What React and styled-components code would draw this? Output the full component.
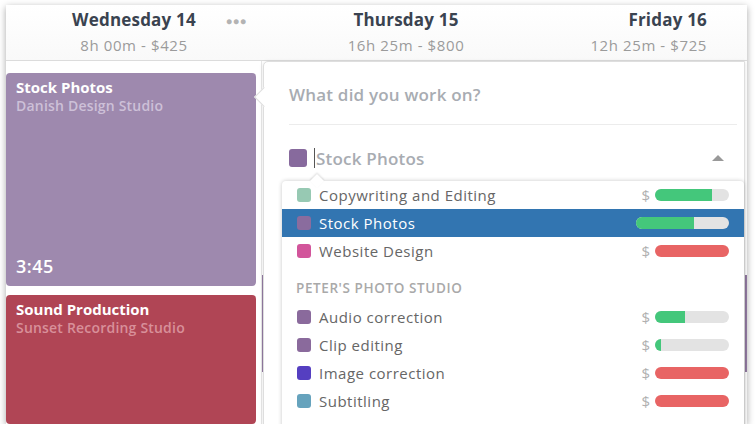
import React from 'react'
import styled, { createGlobalStyle } from 'styled-components'

const GlobalStyle = createGlobalStyle`
  html, body {
    margin: 0;
    padding: 0;
    background: #ffffff;
  }
  body {
    font-family: "Open Sans", Lato, "Liberation Sans", sans-serif;
    -webkit-font-smoothing: antialiased;
  }
`

const Page = styled.div`
  padding: 5px 0 0 6px;
`

const Window = styled.div`
  position: relative;
  width: 741px;
  height: 419px;
  overflow: hidden;
  background: #fff;
  box-shadow: 0 2px 7px rgba(0, 0, 0, 0.35);
`

const Header = styled.div`
  display: grid;
  grid-template-columns: 256px 288px 1fr;
  height: 55px;
  border-bottom: 1px solid #dcdcdc;
  background: linear-gradient(#ffffff, #f9f9f9);
`

const DayCell = styled.div`
  display: grid;
  grid-template-columns: 1fr auto 1fr;
  align-items: start;
  padding-top: 4px;
`

const Day = styled.div`
  grid-column: 2;
  display: flex;
  flex-direction: column;
  align-items: ${p => (p.$right ? 'flex-end' : 'center')};
`

const RightCell = styled.div`
  display: flex;
  justify-content: flex-end;
  padding: 4px 40px 0 0;
`

const DayTitle = styled.div`
  font-size: 17px;
  line-height: 22px;
  font-weight: 700;
  letter-spacing: 0.2px;
  color: #3a4350;
`

const DaySub = styled.div`
  font-size: 15px;
  line-height: 20px;
  margin-top: 4px;
  letter-spacing: 0.6px;
  color: #9b9b9b;
`

const Dots = styled.div`
  grid-column: 3;
  justify-self: end;
  margin: 2px 15px 0 0;
  font-size: 10px;
  line-height: 20px;
  letter-spacing: 1px;
  color: #b3b3b3;
`

const Body = styled.div`
  display: grid;
  grid-template-columns: 250px 1fr;
  column-gap: 5px;
  height: 363px;
`

const Column = styled.div`
  display: flex;
  flex-direction: column;
  gap: 9px;
  padding-top: 12px;
`

const WideColumn = styled.div`
  border-left: 1px solid #e8e8e8;
  padding-top: 214px;
`

const Event = styled.div`
  flex: ${p => p.$grow || 'none'};
  height: ${p => (p.$height ? `${p.$height}px` : 'auto')};
  background: ${p => p.$color};
  border-radius: 4px;
  padding: 5px 10px 10px 10px;
  box-sizing: border-box;
  display: flex;
  flex-direction: column;
`

const EventTitle = styled.div`
  font-size: 15px;
  line-height: 19px;
  font-weight: 700;
  color: #fff;
`

const EventClient = styled.div`
  font-size: 14px;
  line-height: 18px;
  font-weight: 600;
  letter-spacing: 0.2px;
  color: ${p => p.$color};
`

const EventTime = styled.div`
  margin-top: auto;
  font-size: 18px;
  line-height: 20px;
  font-weight: 600;
  letter-spacing: 0.5px;
  color: #fff;
`

const Block = styled.div`
  height: 97px;
  background: #937ba3;
`

const Popover = styled.div`
  position: absolute;
  left: 257px;
  top: 56px;
  width: 482px;
  bottom: -10px;
  background: #fff;
  border: 1px solid #dedede;
  border-radius: 5px 0 0 0;
  box-shadow: 0 1px 4px rgba(0, 0, 0, 0.12);
  padding: 22px 7px 0 25px;
  box-sizing: border-box;

  &::before {
    content: '';
    position: absolute;
    left: -7px;
    top: 28px;
    width: 13px;
    height: 13px;
    background: #fff;
    border-left: 1px solid #dedede;
    border-bottom: 1px solid #dedede;
    transform: rotate(45deg);
  }
`

const Question = styled.div`
  font-size: 17px;
  line-height: 22px;
  font-weight: 600;
  letter-spacing: 0.2px;
  color: #a8acb2;
  padding-bottom: 18px;
  border-bottom: 1px solid #ececec;
`

const InputRow = styled.div`
  display: flex;
  align-items: center;
  height: 24px;
  margin-top: 21px;
  padding-right: 13px;
`

const Swatch = styled.span`
  flex: none;
  width: ${p => p.$size}px;
  height: ${p => p.$size}px;
  border-radius: 3px;
  background: ${p => p.$color};
`

const Cursor = styled.span`
  width: 1px;
  height: 20px;
  margin-left: 7px;
  background: #555;
`

const InputText = styled.span`
  flex: 1;
  margin-left: 1px;
  font-size: 17px;
  font-weight: 600;
  letter-spacing: 0.2px;
  color: #a8acb2;
`

const Caret = styled.span`
  width: 0;
  height: 0;
  border-left: 6px solid transparent;
  border-right: 6px solid transparent;
  border-bottom: 6px solid #999;
`

const Dropdown = styled.div`
  position: absolute;
  left: 18px;
  right: 0;
  top: 119px;
  bottom: 0;
  background: #fff;
  border-radius: 4px 4px 0 0;
  box-shadow: 0 0 4px rgba(0, 0, 0, 0.22);

  &::before {
    content: '';
    position: absolute;
    left: 30px;
    top: -5px;
    width: 10px;
    height: 10px;
    background: #fff;
    transform: rotate(45deg);
    box-shadow: -1px -1px 2px rgba(0, 0, 0, 0.12);
  }
`

const List = styled.div`
  position: relative;
  display: flex;
  flex-direction: column;
`

const Item = styled.div`
  display: flex;
  align-items: center;
  height: 28px;
  padding: 0 15px;
  background: ${p => (p.$active ? '#3275b1' : 'transparent')};
`

const ItemName = styled.span`
  flex: 1;
  margin-left: 8px;
  font-size: 15px;
  letter-spacing: 0.5px;
  color: ${p => (p.$active ? '#ffffff' : '#666666')};
`

const Dollar = styled.span`
  font-size: 15px;
  color: #b0b0b0;
  margin-right: 5px;
`

const Bar = styled.div`
  width: ${p => p.$width}px;
  height: 12px;
  border-radius: 6px;
  background: #e3e3e3;
  overflow: hidden;
`

const Fill = styled.div`
  height: 100%;
  background: ${p => p.$color};
`

const Group = styled.div`
  padding: 15px 14px 7px;
  font-size: 13.5px;
  line-height: 16px;
  font-weight: 600;
  letter-spacing: 0.6px;
  color: #a9a9a9;
  text-transform: uppercase;
`

const projects = [
  { name: 'Copywriting and Editing', color: '#97c9b3', fill: 77, bar: 'green' },
  { name: 'Stock Photos', color: '#8a6c9e', fill: 62, bar: 'green', active: true },
  { name: 'Website Design', color: '#d2559b', fill: 100, bar: 'red' },
]

const studio = [
  { name: 'Audio correction', color: '#8a6a9c', fill: 40, bar: 'green' },
  { name: 'Clip editing', color: '#8a6a9c', fill: 8, bar: 'green' },
  { name: 'Image correction', color: '#553fc1', fill: 100, bar: 'red' },
  { name: 'Subtitling', color: '#66a3bd', fill: 100, bar: 'red' },
]

const barColors = { green: '#44c77b', red: '#e86464' }

const ProjectItem = ({ item }) => (
  <Item $active={item.active}>
    <Swatch $size={14} $color={item.color} />
    <ItemName $active={item.active}>{item.name}</ItemName>
    {!item.active && <Dollar>$</Dollar>}
    <Bar $width={item.active ? 93 : 74}>
      <Fill $color={barColors[item.bar]} style={{ width: `${item.fill}%` }} />
    </Bar>
  </Item>
)

const App = () => {
  return (
    <Page>
      <GlobalStyle />
      <Window>
        <Header>
          <DayCell>
            <Day>
              <DayTitle>Wednesday 14</DayTitle>
              <DaySub>8h 00m - $425</DaySub>
            </Day>
            <Dots>●●●</Dots>
          </DayCell>
          <DayCell>
            <Day>
              <DayTitle>Thursday 15</DayTitle>
              <DaySub>16h 25m - $800</DaySub>
            </Day>
          </DayCell>
          <RightCell>
            <Day $right>
              <DayTitle>Friday 16</DayTitle>
              <DaySub>12h 25m - $725</DaySub>
            </Day>
          </RightCell>
        </Header>

        <Body>
          <Column>
            <Event $color="#9e89ae" $height={213}>
              <EventTitle>Stock Photos</EventTitle>
              <EventClient $color="#cdc0d8">Danish Design Studio</EventClient>
              <EventTime>3:45</EventTime>
            </Event>
            <Event $color="#b04555" $grow={1}>
              <EventTitle>Sound Production</EventTitle>
              <EventClient $color="#d8909a">Sunset Recording Studio</EventClient>
            </Event>
          </Column>
          <WideColumn>
            <Block />
          </WideColumn>
        </Body>

        <Popover>
          <Question>What did you work on?</Question>
          <InputRow>
            <Swatch $size={18} $color="#876a9d" />
            <Cursor />
            <InputText>Stock Photos</InputText>
            <Caret />
          </InputRow>
          <Dropdown>
            <List>
              {projects.map(p => (
                <ProjectItem key={p.name} item={p} />
              ))}
              <Group>Peter's Photo Studio</Group>
              {studio.map(p => (
                <ProjectItem key={p.name} item={p} />
              ))}
            </List>
          </Dropdown>
        </Popover>
      </Window>
    </Page>
  )
}

export default App
